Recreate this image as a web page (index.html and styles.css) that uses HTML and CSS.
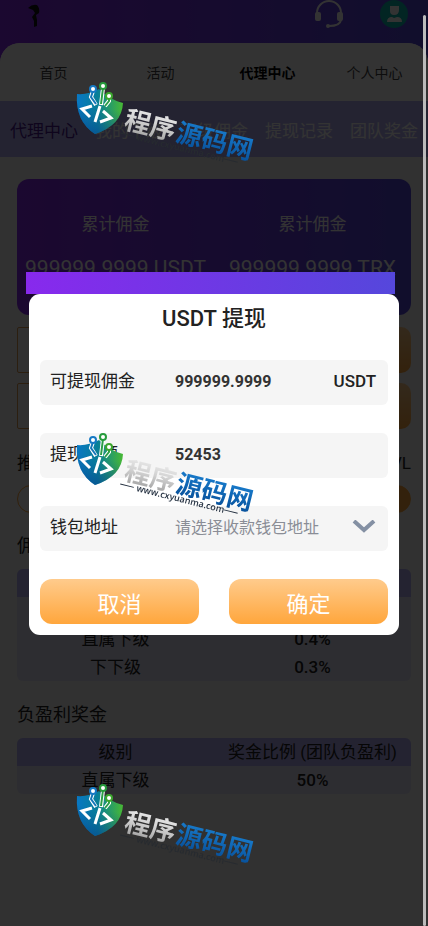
FILE: index.html
```html
<!DOCTYPE html>
<html lang="zh-CN">
<head>
  <meta charset="UTF-8">
  <meta name="viewport" content="width=device-width, initial-scale=1">
  <title>代理中心</title>
  <link rel="stylesheet" href="styles.css">
</head>
<body>
  <header class="header">
    <svg class="logo" width="14" height="26" viewBox="0 0 14 26">
      <path d="M0 4 Q4 0 9 1 Q12 4 11 9 L8 11 L9 16 L9 22 L6 23 L6 17 L4 13 L7 9 L5 6 Z" fill="#111"/>
    </svg>
    <div class="header-icons">
      <svg width="30" height="30" viewBox="0 0 30 30" fill="none" stroke="#fff" stroke-width="2">
        <path d="M3 14 V13 A12 12 0 0 1 27 13 V14"/>
        <path d="M27 20 Q26 26 15 26"/>
        <rect x="2" y="13" width="4" height="7" rx="1" fill="#fff"/>
        <rect x="24" y="13" width="4" height="7" rx="1" fill="#fff"/>
        <circle cx="14" cy="26" r="1"/>
      </svg>
      <svg width="30" height="30" viewBox="0 0 30 30">
        <circle cx="14" cy="14" r="14" fill="#0bb8ae"/>
        <path d="M10 6 H19 V10 Q19 15 14 15 Q10 15 10 11 Z" fill="#fff"/>
        <path d="M7 22 Q7 17 12 17 L14 18 L17 17 Q22 17 22 22 Z" fill="#fff"/>
      </svg>
    </div>
  </header>

  <main class="page">
    <nav class="nav">
      <a href="#">首页</a>
      <a href="#">活动</a>
      <a href="#" class="active">代理中心</a>
      <a href="#">个人中心</a>
    </nav>

    <nav class="tabs">
      <a href="#" class="active">代理中心</a>
      <a href="#">我的下级</a>
      <a href="#">下级佣金</a>
      <a href="#">提现记录</a>
      <a href="#">团队奖金</a>
    </nav>

    <div class="content">
      <section class="summary">
        <div>
          <span>累计佣金</span>
          <strong>999999.9999 USDT</strong>
        </div>
        <div>
          <span>累计佣金</span>
          <strong>999999.9999 TRX</strong>
        </div>
      </section>

      <div class="row">
        <button class="outline" aria-label="USDT"></button>
        <button class="solid" aria-label="USDT 提现"></button>
      </div>
      <div class="row">
        <button class="outline" aria-label="TRX"></button>
        <button class="solid" aria-label="TRX 提现"></button>
      </div>

      <div class="invite"><span>推</span><span>VL</span></div>
      <div class="bar"></div>

      <h2>佣金</h2>
      <table>
        <thead>
          <tr><th></th><th></th></tr>
        </thead>
        <tbody>
          <tr><td></td><td></td></tr>
          <tr><td>直属下级</td><td>0.4%</td></tr>
          <tr><td>下下级</td><td>0.3%</td></tr>
        </tbody>
      </table>

      <h2>负盈利奖金</h2>
      <table>
        <thead>
          <tr><th>级别</th><th>奖金比例 (团队负盈利)</th></tr>
        </thead>
        <tbody>
          <tr><td>直属下级</td><td>50%</td></tr>
        </tbody>
      </table>
    </div>
  </main>

  <!-- Withdraw dialog -->
  <div class="overlay">
    <form class="modal">
      <h1>USDT 提现</h1>
      <div class="field">
        <label for="balance">可提现佣金</label>
        <input id="balance" type="text" value="999999.9999" readonly>
        <span class="unit">USDT</span>
      </div>
      <div class="field amount">
        <label for="amount">提现金额</label>
        <input id="amount" type="text" value="52453">
      </div>
      <div class="field">
        <label for="wallet">钱包地址</label>
        <select id="wallet">
          <option>请选择收款钱包地址</option>
        </select>
        <svg class="chevron" width="24" height="14" viewBox="0 0 24 14" fill="none" stroke="#8490a3" stroke-width="4">
          <path d="M2 1 L12 10 L22 1"/>
        </svg>
      </div>
      <div class="actions">
        <button type="button">取消</button>
        <button type="button">确定</button>
      </div>
    </form>
  </div>

  <!-- Watermarks -->
  <svg class="defs" width="0" height="0">
    <defs>
      <linearGradient id="shield" x1="0" y1="0" x2="1" y2="0">
        <stop offset="0" stop-color="#0877c4"/>
        <stop offset="0.45" stop-color="#087f98"/>
        <stop offset="1" stop-color="#48b934"/>
      </linearGradient>
      <linearGradient id="shade" x1="0.6" y1="0" x2="0.4" y2="1">
        <stop offset="0.4" stop-color="#064d8a" stop-opacity="0"/>
        <stop offset="1" stop-color="#063f90" stop-opacity="0.6"/>
      </linearGradient>
      <linearGradient id="silver" x1="0" y1="0" x2="0" y2="1">
        <stop offset="0" stop-color="#f4f4f4"/>
        <stop offset="0.5" stop-color="#d2d2d2"/>
        <stop offset="1" stop-color="#9a9a9a"/>
      </linearGradient>
      <linearGradient id="blue" x1="0" y1="0" x2="0" y2="1">
        <stop offset="0" stop-color="#1c86d8"/>
        <stop offset="1" stop-color="#064b94"/>
      </linearGradient>
      <g id="mark">
        <path d="M5 14 Q16 15 27 9 Q38 20 51 23 Q50 45 23 54 Q3 41 5 14 Z" fill="url(#shield)"/>
        <path d="M5 14 Q16 15 27 9 Q38 20 51 23 Q50 45 23 54 Q3 41 5 14 Z" fill="url(#shade)"/>
        <g fill="none" stroke="#fff" stroke-width="4">
          <path d="M21 11 L19 17 L24 25"/>
          <path d="M31 8 L29 25"/>
          <path d="M37 18 L37 21 L33 26"/>
        </g>
        <path d="M21 11 L19 17 L24 24" fill="none" stroke="#1677b8" stroke-width="2"/>
        <path d="M31 8 L29 24 M37 18 L37 21 L33 26" fill="none" stroke="#2b9e48" stroke-width="2"/>
        <circle cx="21" cy="9" r="3" fill="#fff" stroke="#1679c4" stroke-width="2"/>
        <circle cx="31" cy="6" r="3" fill="#fff" stroke="#269b3c" stroke-width="2"/>
        <circle cx="37" cy="16" r="3" fill="#fff" stroke="#3ca62e" stroke-width="2"/>
        <path d="M20 26 L10 29 L18 37 M28 26 L23 42 M31 31 L39 38 L28 42" fill="none" stroke="#fff" stroke-width="3"/>
        <g transform="translate(51 48) rotate(14)">
          <text class="mark-name" x="0" y="0" fill="url(#silver)">程序</text>
          <text class="mark-name" x="53" y="0" fill="url(#blue)">源码网</text>
        </g>
        <g transform="translate(64 60) rotate(14)">
          <path class="mark-line" d="M-17 -3 H-3 M90 -3 H104"/>
          <text class="mark-url" x="0" y="0">www.cxyuanma.com</text>
        </g>
      </g>
    </defs>
  </svg>
  <div class="watermarks">
    <svg class="dim" width="200" height="90" viewBox="0 0 200 90"><use href="#mark"/></svg>
    <svg width="200" height="90" viewBox="0 0 200 90"><use href="#mark"/></svg>
    <svg class="dim" width="200" height="90" viewBox="0 0 200 90"><use href="#mark"/></svg>
  </div>

  <div class="scrollbar"></div>
</body>
</html>
```

FILE: styles.css
```css
:root {
  --purple: linear-gradient(90deg, #8829ed, #5547dc);
  --orange: linear-gradient(180deg, #ffcb8c, #ffa63c);
  --lilac: #b5b0f5;
  --text: #222;
  --mark-url: #243040;
}

* {
  box-sizing: border-box;
}

body {
  margin: 0;
  min-height: 100vh;
  overflow: hidden;
  font-family: Roboto, "Noto Sans CJK SC", sans-serif;
  font-size: 17px;
  color: var(--text);
  background: var(--purple);
}

a {
  text-decoration: none;
}

button,
input,
select {
  font-family: inherit;
  border: none;
  padding: 0;
}

.header {
  display: flex;
  justify-content: space-between;
  height: 43px;
  padding: 0 18px 0 28px;
}

.logo {
  margin-top: 4px;
}

.header-icons {
  display: flex;
  gap: 36px;
}

.page {
  min-height: calc(100vh - 43px);
  background: #f2f2f2;
  border-radius: 20px 20px 0 0;
}

.nav {
  display: grid;
  grid-template-columns: repeat(4, 1fr);
  height: 58px;
  align-items: center;
  text-align: center;
  background: #fff;
  border-radius: 20px 20px 0 0;
}

.nav a {
  font-size: 14px;
  color: #444;
}

.nav .active {
  font-weight: 700;
  color: #000;
}

.tabs {
  display: flex;
  gap: 17px;
  height: 56px;
  padding: 0 10px;
  align-items: center;
  white-space: nowrap;
  background: var(--lilac);
}

.tabs a {
  color: #fff;
}

.tabs .active {
  color: #4a1a90;
}

.content {
  padding: 22px 17px;
}

.summary {
  display: grid;
  grid-template-columns: 1fr 1fr;
  height: 136px;
  margin-bottom: 12px;
  padding-top: 33px;
  text-align: center;
  color: #fff;
  white-space: nowrap;
  background: var(--purple);
  border-radius: 12px;
}

.summary span,
.summary strong {
  display: block;
  line-height: 24px;
}

.summary strong {
  margin-top: 20px;
  font-size: 21px;
  font-weight: 400;
}

.row {
  display: flex;
  justify-content: space-between;
  margin-bottom: 10px;
}

.row button {
  width: 45%;
  height: 46px;
}

.row .outline {
  background: transparent;
  border: 1px solid #d99a50;
  border-radius: 2px;
}

.row .solid {
  background: var(--orange);
  border-radius: 10px;
}

.invite {
  display: flex;
  justify-content: space-between;
  margin-top: 22px;
  line-height: 24px;
}

.bar {
  height: 28px;
  margin: 10px 0 20px;
  border: 1px solid #ffa63c;
  border-radius: 14px;
  background: linear-gradient(90deg, transparent 70%, #ffa63c 70%);
}

h2 {
  margin: 0 0 10px;
  font-size: 18px;
  font-weight: 400;
  line-height: 26px;
}

table {
  width: 100%;
  margin-bottom: 21px;
  table-layout: fixed;
  border-collapse: collapse;
  text-align: center;
  background: #e1e1f5;
  border-radius: 6px;
  overflow: hidden;
}

th,
td {
  height: 28px;
  padding: 0;
  font-weight: 400;
  line-height: 28px;
  white-space: nowrap;
}

th {
  background: var(--lilac);
}

td:last-child {
  font-weight: 500;
}

.overlay {
  position: fixed;
  inset: 0;
  display: flex;
  align-items: center;
  justify-content: center;
  padding: 3px 29px 0;
  background: rgba(0, 0, 0, 0.8);
}

.modal {
  position: relative;
  flex: 1;
  min-width: 0;
  max-width: 480px;
  padding: 10px 11px 11px;
  background: #fff;
  border-radius: 11px;
}

/* strip that sticks out above the dialog */
.modal::before {
  content: "";
  position: absolute;
  left: -3px;
  right: 4px;
  bottom: 100%;
  height: 22px;
  background: var(--purple);
}

.modal h1 {
  margin: 0 0 26px;
  font-size: 22px;
  font-weight: 500;
  line-height: 30px;
  text-align: center;
}

.field {
  display: flex;
  align-items: center;
  height: 45px;
  padding: 0 12px 3px 10px;
  background: #f5f5f5;
  border-radius: 6px;
}

.field label {
  flex: 0 0 125px;
  line-height: 24px;
}

.field input,
.field select {
  flex: 1;
  min-width: 0;
  height: 42px;
  font-size: 16px;
  background: transparent;
  outline: none;
}

.field input {
  font-weight: 700;
  color: #333;
}

.field select {
  appearance: none;
  color: #8a8d96;
}

.amount {
  margin: 28px 0;
}

.unit {
  font-weight: 500;
}

.chevron {
  pointer-events: none;
}

.actions {
  display: grid;
  grid-template-columns: 1fr 1fr;
  gap: 30px;
  margin-top: 28px;
}

.actions button {
  height: 45px;
  font-size: 22px;
  color: #fff;
  background: var(--orange);
  border-radius: 12px;
}

.defs {
  position: absolute;
}

.watermarks {
  position: absolute;
  top: 80px;
  left: 72px;
  display: flex;
  flex-direction: column;
  gap: 261px;
  pointer-events: none;
}

.dim {
  --mark-url: #272b30;
}

.mark-name {
  font-family: "Noto Sans CJK SC", sans-serif;
  font-size: 26px;
  font-weight: 700;
}

.mark-url {
  font-family: "Open Sans", sans-serif;
  font-size: 9px;
  font-weight: 600;
  fill: var(--mark-url);
}

.mark-line {
  stroke: var(--mark-url);
}

.scrollbar {
  position: fixed;
  top: 15px;
  right: 2px;
  bottom: 0;
  width: 3px;
  background: #bbb;
  border-radius: 2px;
}
```
